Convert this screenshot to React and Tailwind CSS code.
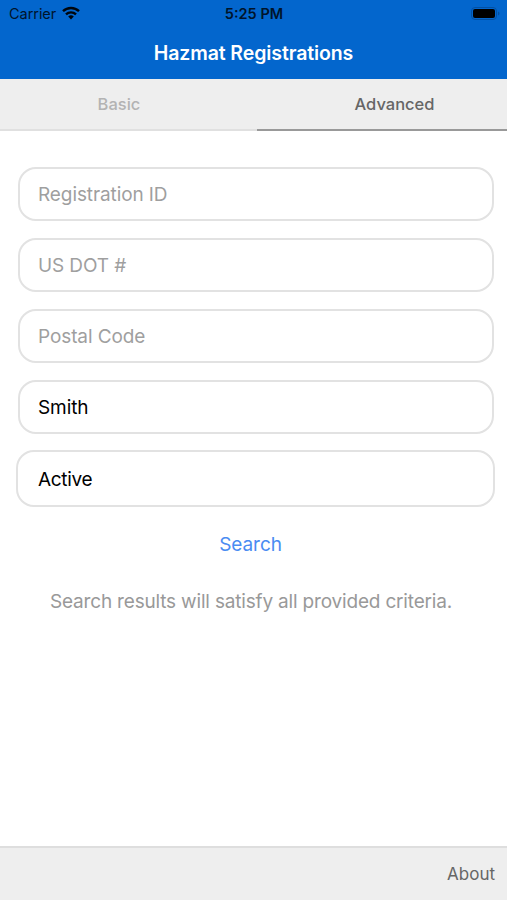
import { useState } from "react";

const inputClass =
  "block w-full h-[54px] rounded-[18px] border-2 border-[#e2e2e2] bg-white px-[18px] pt-px text-[19px] tracking-[-0.1px] text-black outline-none placeholder:text-[#9f9f9f]";

const StatusBar = () => (
  <div className="grid h-[27px] grid-cols-3 items-center pl-[9px] pr-[7px] text-[14.5px] text-[#00142b]">
    <div className="flex items-center gap-[6px]">
      <span className="tracking-[-0.05px]">Carrier</span>
      <svg className="-mt-px" width="18" height="14" viewBox="0 0 18 14" fill="none" stroke="#00060d" strokeWidth="2.4">
        <path d="M1 5.2a11.5 11.5 0 0 1 16 0" />
        <path d="M4 8.4a7.2 7.2 0 0 1 10 0" />
        <path d="M9 13.5L6.2 10.6a4.2 4.2 0 0 1 5.6 0z" fill="#00060d" stroke="none" />
      </svg>
    </div>
    <span className="pr-px text-center font-semibold">5:25 PM</span>
    <svg className="justify-self-end" width="29" height="14" viewBox="0 0 29 14" fill="none">
      <rect x="0.5" y="0.5" width="25" height="12" rx="3.5" stroke="#0350a3" />
      <rect x="2" y="2" width="22" height="9" rx="2" fill="#000" />
      <path d="M27 4.5c2 .8 2 3.2 0 4z" fill="#0350a3" />
    </svg>
  </div>
);

const App = () => {
  const [form, setForm] = useState({ id: "", dot: "", postal: "", name: "Smith", status: "Active" });

  const handleChange = (e) => {
    setForm({ ...form, [e.target.name]: e.target.value });
  };

  return (
    <div className="flex h-screen flex-col bg-white font-['Inter','Liberation_Sans',sans-serif]">
      <header className="h-[79px] bg-[#0366cd]">
        <StatusBar />
        <h1 className="text-center text-[19.5px] font-semibold leading-[52px] tracking-[-0.1px] text-white">
          Hazmat Registrations
        </h1>
      </header>

      {/* Tabs */}
      <nav className="flex h-[52px] bg-[#eeeeee] text-[16.5px] font-medium">
        <button className="w-[257px] border-b-2 border-[#e0e0e0] pr-[19px] text-[#b3b3b3]">Basic</button>
        <button className="flex-1 border-b-2 border-[#999999] pl-[25px] text-[#666666]">Advanced</button>
      </nav>

      <main className="flex flex-1 flex-col pt-[36px]">
        <div className="flex flex-col gap-[17px] pl-[18px] pr-[13px]">
          <input name="id" placeholder="Registration ID" value={form.id} onChange={handleChange} className={inputClass} />
          <input name="dot" placeholder="US DOT #" value={form.dot} onChange={handleChange} className={inputClass} />
          <input name="postal" placeholder="Postal Code" value={form.postal} onChange={handleChange} className={inputClass} />
          <input name="name" value={form.name} onChange={handleChange} className={inputClass} />
        </div>
        <div className="mt-[16px] pl-[16px] pr-[12px]">
          <button className="block h-[57px] w-full rounded-[18px] border-2 border-[#e2e2e2] px-[20px] pt-[3px] text-left text-[19px] tracking-[-0.3px] text-black">
            {form.status}
          </button>
        </div>
        <button className="mt-[23px] self-center pr-[6px] text-[19px] leading-[30px] tracking-[-0.05px] text-[#4a8cf2]">
          Search
        </button>
        <p className="mt-[27px] pr-[5px] text-center text-[19px] leading-[30px] tracking-[-0.18px] text-[#999999]">
          Search results will satisfy all provided criteria.
        </p>
      </main>

      <footer className="flex h-[54px] items-center justify-end border-t-2 border-[#dedede] bg-[#eeeeee] pr-[12px] pt-px">
        <button className="text-[17px] text-[#666666]">About</button>
      </footer>
    </div>
  );
};

export default App;
